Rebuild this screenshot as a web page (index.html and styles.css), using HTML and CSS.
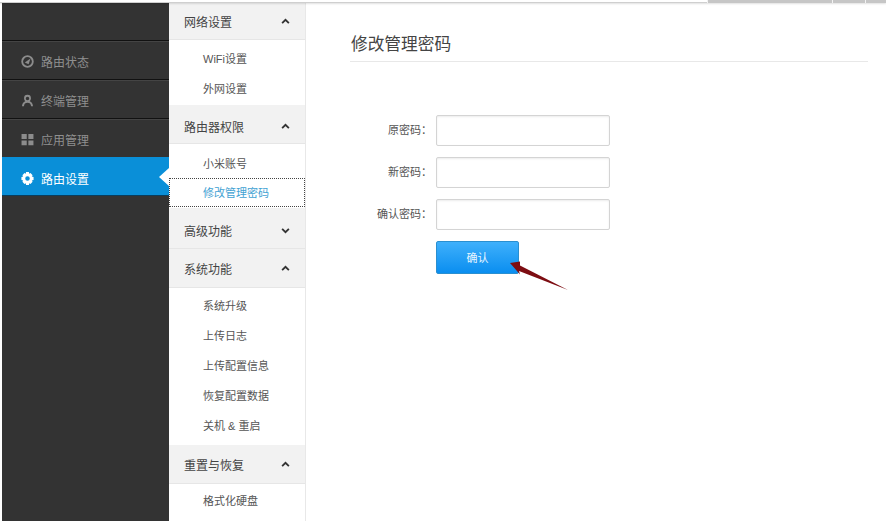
FILE: index.html
```html
<!DOCTYPE html>
<html lang="zh">
<head>
<meta charset="utf-8">
<title>修改管理密码</title>
<link rel="stylesheet" href="styles.css">
</head>
<body>
<div class="topbar"><div class="tab-light"></div><div class="tab t1"></div><div class="tab t2"></div><div class="tab t3"></div></div>
<div class="page">
  <nav class="side">
    <div class="logo"></div>
    <a class="side-item"><svg class="ico" viewBox="0 0 12 12"><circle cx="6" cy="6" r="4.900" fill="none" stroke="#8c8c8c" stroke-width="1.700"/><path d="M3.500 7 8.800 3.200 7 8.500z" fill="#8c8c8c"/></svg>路由状态</a>
    <a class="side-item"><svg class="ico" viewBox="0 0 12 12"><path d="M6 .8a3.200 3.200 0 0 1 3.200 3.200c0 1.100-.4 2-1.100 2.600 1.700.6 2.800 2.300 3 4.700H9.300C9.100 9 8 8 6 8s-3.100 1-3.300 3.300H.9c.2-2.400 1.300-4.100 3-4.700-.7-.6-1.100-1.500-1.100-2.600A3.200 3.200 0 0 1 6 .8zm0 1.700a1.600 1.600 0 1 0 0 3.200 1.600 1.600 0 0 0 0-3.200z" fill="#8c8c8c"/></svg>终端管理</a>
    <a class="side-item"><svg class="ico" viewBox="0 0 12 12"><path d="M.5 1h4.800v4.600H.5zM6.800 1h4.700v4.600H6.800zM.5 7h4.800v4.300H.5zM6.800 7h4.700v4.300H6.800z" fill="#8c8c8c"/></svg>应用管理</a>
    <a class="side-item active"><svg class="ico" viewBox="0 0 12 12"><path fill-rule="evenodd" d="M4.700 0h2.600l.3 1.600 1.200-.6 1.900 1.900-.7 1.200 1.600.5v2.800l-1.600.5.700 1.200-1.900 1.900-1.200-.6-.3 1.600H4.700l-.3-1.600-1.200.6-1.900-1.900.7-1.200L.4 7.400V4.600L2 4.100l-.7-1.200L3.200 1l1.200.6zM6 3.900a2.100 2.100 0 1 0 0 4.200 2.100 2.100 0 0 0 0-4.200z" fill="#fff"/></svg>路由设置</a>
  </nav>
  <aside class="sub">
    <div class="sub-head tall">网络设置<svg class="chev" viewBox="0 0 8 6"><path d="M1 4.500 4 1.500l3 3" /></svg></div>
    <div class="sub-list first">
      <a class="sub-item">WiFi设置</a>
      <a class="sub-item">外网设置</a>
    </div>
    <div class="sub-head low">路由器权限<svg class="chev" viewBox="0 0 8 6"><path d="M1 4.500 4 1.500l3 3" /></svg></div>
    <div class="sub-list second">
      <a class="sub-item">小米账号</a>
      <a class="sub-item current">修改管理密码</a>
    </div>
    <div class="sub-head closed">高级功能<svg class="chev" viewBox="0 0 8 6"><path d="M1 1.500 4 4.500l3-3" /></svg></div>
    <div class="sub-head">系统功能<svg class="chev" viewBox="0 0 8 6"><path d="M1 4.500 4 1.500l3 3" /></svg></div>
    <div class="sub-list third">
      <a class="sub-item">系统升级</a>
      <a class="sub-item">上传日志</a>
      <a class="sub-item">上传配置信息</a>
      <a class="sub-item">恢复配置数据</a>
      <a class="sub-item">关机 &amp; 重启</a>
    </div>
    <div class="sub-head">重置与恢复<svg class="chev" viewBox="0 0 8 6"><path d="M1 4.500 4 1.500l3 3" /></svg></div>
    <div class="sub-list fourth">
      <a class="sub-item">格式化硬盘</a>
    </div>
  </aside>
  <main class="main">
    <h1 class="title">修改管理密码</h1>
    <form class="form">
      <div class="row"><label class="lab">原密码：</label><input class="inp" type="password"></div>
      <div class="row"><label class="lab">新密码：</label><input class="inp" type="password"></div>
      <div class="row"><label class="lab">确认密码：</label><input class="inp" type="password"></div>
      <div class="row"><span class="lab"></span><button class="btn" type="button">确认</button></div>
    </form>
  </main>
</div>
<svg class="arrow" viewBox="0 0 70 40" width="70" height="40"><path d="M1 3 11 1.500 11 5.500 59 30 10 11 11 14.500z" fill="#7d0d12"/></svg>
</body>
</html>
```
FILE: styles.css
```css
* { box-sizing: border-box; }
html, body { margin: 0; height: 100%; }
body {
  width: 886px; height: 521px; overflow: hidden; position: relative;
  background: #fff; color: #555;
  font-family: "Liberation Sans", "Noto Sans CJK SC", sans-serif;
  font-size: 12px;
}
.topbar {
  display: flex; height: 3px; background: #c8c8c8;
  box-shadow: 0 1px 2px rgba(0,0,0,.12);
  position: relative; z-index: 2;
}
.tab-light { width: 707px; background: #fff; border-bottom: 1px solid #cfcfcf; }
.tab { background: #c6c6c6; border-left: 1px solid #f2f2f2; }
.t1 { width: 125px; }
.t2 { width: 33px; }
.t3 { flex: 1; }
.page { display: flex; height: 518px; padding-left: 2px; }
.side { width: 167px; background: #333; flex: none; }
.logo { height: 38px; border-bottom: 1px solid #111; }
.side-item {
  display: flex; align-items: center; height: 39px;
  padding: 2px 0 0 19px; gap: 7px;
  color: #8f8f8f; font-size: 12px;
  border-top: 1px solid #444; border-bottom: 1px solid #111;
  position: relative;
}
.ico { width: 13px; height: 13px; flex: none; }
.side-item.active {
  background: #0a8fd8; color: #fff; border-top: 0; height: 39px;
  margin-top: -1px; padding-top: 4px; border-bottom: 1px solid #0a3d5c;
}
.side-item.active::after {
  content: ""; position: absolute; right: 0; top: 11px;
  border: 9px solid transparent; border-right: 10px solid #fff; border-left: 0;
}
.sub { width: 137px; flex: none; border-right: 1px solid #e8e8e8; background: #fff; }
.sub-head {
  display: flex; align-items: center; justify-content: space-between;
  height: 39px; padding: 0 15px 0 15px;
  background: #f2f2f2; border-bottom: 1px solid #e6e6e6;
  color: #444; font-size: 12px;
}
.sub-head.tall { height: 37px; }
.sub-head.low { padding-top: 4px; }
.sub-head.closed { height: 41px; padding-top: 4px; }
.chev { width: 9px; height: 7px; fill: none; stroke: #333; stroke-width: 1.6; }
.sub-list { padding: 4px 0 3px; }
.sub-list.first { padding: 3px 0 2px; }
.sub-list.second { padding: 4px 0 1px; }
.sub-list.third { padding: 2px 0 5px; }
.sub-list.fourth { padding: 1px 0 0; }
.sub-item {
  display: flex; align-items: center; height: 30px;
  padding-left: 34px; color: #555; font-size: 11px;
}
.sub-item.current {
  color: #3fa2d3; outline: 1px dotted #444; outline-offset: -1px;
  height: 29px; padding-bottom: 1px;
}
.main { flex: 1; padding: 26px 18px 0 44px; }
.title {
  margin: 0; height: 33px; padding: 2px 0 0 1px;
  font-size: 16.700px; font-weight: 400; line-height: 28px; color: #444;
  border-bottom: 1px solid #e8e8e8;
}
.form { display: flex; flex-direction: column; gap: 11px; margin-top: 53px; }
.row { display: flex; align-items: center; }
.lab {
  width: 86px; text-align: right; color: #555; font-size: 11px;
  padding: 0 4px 3px 0;
  font-family: "Liberation Sans", "Noto Sans CJK TC", sans-serif;
}
.inp {
  width: 174px; height: 31px; border: 1px solid #d4d4d4; border-radius: 2px;
  box-shadow: inset 0 1px 2px rgba(0,0,0,.08); background: #fff; outline: 0;
}
.btn {
  width: 83px; height: 33px; border: 1px solid #2a8fd0; border-radius: 2px;
  background: linear-gradient(#3fb0fb, #0a8ef0); color: #e8f6ff; padding: 0 0 2px;
  font: 11px "Liberation Sans", "Noto Sans CJK SC", sans-serif;
}
.arrow { position: absolute; left: 509px; top: 260px; }
```
